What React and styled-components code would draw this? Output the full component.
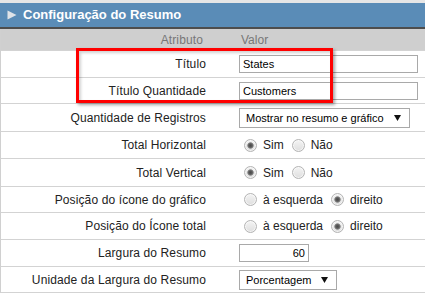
import React from "react";
import styled, { createGlobalStyle } from "styled-components";

const Global = createGlobalStyle`
  html, body { margin: 0; padding: 0; background: #fff; }
  body { font-family: "Liberation Sans", Arial, sans-serif; }
`;

const Panel = styled.div`
  position: relative;
  width: 425px;
  border-top: 3px solid #e6e6e6;
`;

const TitleBar = styled.div`
  height: 24px;
  display: flex;
  align-items: center;
  background: #5a8cb7;
  border-bottom: 2px solid #4d4d4d;
  padding-left: 7px;
  gap: 6px;
`;

const Title = styled.span`
  color: #fff;
  font-weight: bold;
  font-size: 13px;
  line-height: 24px;
`;

const Row = styled.div`
  display: grid;
  grid-template-columns: 234px 1fr;
  height: ${(p) => p.$h}px;
  box-sizing: border-box;
  border-left: 1px solid #d0d0d0;
  border-bottom: 1px solid #d3d3d3;
  background: ${(p) => (p.$head ? "#cfcfcf" : "#fff")};
`;

const LabelCell = styled.div`
  display: flex;
  align-items: center;
  justify-content: flex-end;
  padding-right: ${(p) => (p.$head ? 32 : 29)}px;
  font-size: 12px;
  letter-spacing: 0.12px;
  color: ${(p) => (p.$head ? "#777" : "#222")};
`;

const ValueCell = styled.div`
  display: flex;
  align-items: center;
  padding-left: ${(p) => (p.$head ? 6 : 4)}px;
  font-size: 12px;
  color: ${(p) => (p.$head ? "#777" : "#222")};
`;

const TextBox = styled.div`
  box-sizing: border-box;
  width: ${(p) => p.$w}px;
  height: 18px;
  border: 1px solid #a9a9a9;
  background: #fff;
  font-size: 11px;
  color: #000;
  display: flex;
  align-items: center;
  justify-content: ${(p) => (p.$right ? "flex-end" : "flex-start")};
  padding: 0 3px;
`;

const SelectBox = styled.div`
  box-sizing: border-box;
  height: 20px;
  display: inline-flex;
  align-items: center;
  border: 1px solid #a9a9a9;
  background: #fff;
  font-size: 11px;
  color: #000;
  padding: 0 8px 0 6px;
  gap: 10px;
`;

const Option = styled.label`
  display: flex;
  align-items: center;
  margin-right: 3px;
  font-size: 12px;
  color: #222;
`;

const Radio = styled.span`
  box-sizing: border-box;
  width: 13px;
  height: 13px;
  border-radius: 50%;
  margin: 0 3px 0 5px;
  border: 1px solid #b4b4b4;
  background: ${(p) =>
    p.$on
      ? "radial-gradient(circle, #4a4a4a 0, #5c5c5c 1.8px, #8a8a8a 2.8px, transparent 3.6px), linear-gradient(#f2f2f2, #dcdcdc)"
      : "linear-gradient(#f4f4f4, #dedede)"};
  box-shadow: inset 0 0 0 1px rgba(255,255,255,0.6);
`;

const OptText = styled.span`
  padding-left: 3px;
`;

const Highlight = styled.div`
  position: absolute;
  left: 76px;
  top: 45px;
  width: 257px;
  height: 55px;
  box-sizing: border-box;
  border: 3px solid #ff0000;
  box-shadow: 2px 2px 3px rgba(0, 0, 0, 0.35), inset 2px 2px 3px rgba(0, 0, 0, 0.18);
  pointer-events: none;
`;

const Arrow = () => (
  <svg width="7" height="6" viewBox="0 0 7 6">
    <path d="M0 0 H7 L3.5 6 Z" fill="#111" />
  </svg>
);

const Tri = () => (
  <svg width="10" height="10" viewBox="0 0 10 10">
    <path d="M0.5 0.5 L9.5 5 L0.5 9.5 Z" fill="#dfe3e8" />
  </svg>
);

const Radios = ({ opts, sel }) => (
  <>
    {opts.map((o, i) => (
      <Option key={o}>
        <Radio $on={i === sel} />
        <OptText>{o}</OptText>
      </Option>
    ))}
  </>
);

export default function App() {
  return (
    <>
      <Global />
      <Panel>
        <TitleBar>
          <Tri />
          <Title>Configuração do Resumo</Title>
        </TitleBar>
        <Row $h={22} $head>
          <LabelCell $head>Atributo</LabelCell>
          <ValueCell $head>Valor</ValueCell>
        </Row>
        <Row $h={27}>
          <LabelCell>Título</LabelCell>
          <ValueCell><TextBox $w={179}>States</TextBox></ValueCell>
        </Row>
        <Row $h={26}>
          <LabelCell>Título Quantidade</LabelCell>
          <ValueCell><TextBox $w={179}>Customers</TextBox></ValueCell>
        </Row>
        <Row $h={28}>
          <LabelCell>Quantidade de Registros</LabelCell>
          <ValueCell>
            <SelectBox>Mostrar no resumo e gráfico<Arrow /></SelectBox>
          </ValueCell>
        </Row>
        <Row $h={27}>
          <LabelCell>Total Horizontal</LabelCell>
          <ValueCell><Radios opts={["Sim", "Não"]} sel={0} /></ValueCell>
        </Row>
        <Row $h={28}>
          <LabelCell>Total Vertical</LabelCell>
          <ValueCell><Radios opts={["Sim", "Não"]} sel={0} /></ValueCell>
        </Row>
        <Row $h={26}>
          <LabelCell>Posição do ícone do gráfico</LabelCell>
          <ValueCell><Radios opts={["à esquerda", "direito"]} sel={1} /></ValueCell>
        </Row>
        <Row $h={27}>
          <LabelCell>Posição do Ícone total</LabelCell>
          <ValueCell><Radios opts={["à esquerda", "direito"]} sel={1} /></ValueCell>
        </Row>
        <Row $h={27}>
          <LabelCell>Largura do Resumo</LabelCell>
          <ValueCell><TextBox $w={70} $right>60</TextBox></ValueCell>
        </Row>
        <Row $h={26}>
          <LabelCell>Unidade da Largura do Resumo</LabelCell>
          <ValueCell>
            <SelectBox>Porcentagem<Arrow /></SelectBox>
          </ValueCell>
        </Row>
        <Highlight />
      </Panel>
    </>
  );
}
